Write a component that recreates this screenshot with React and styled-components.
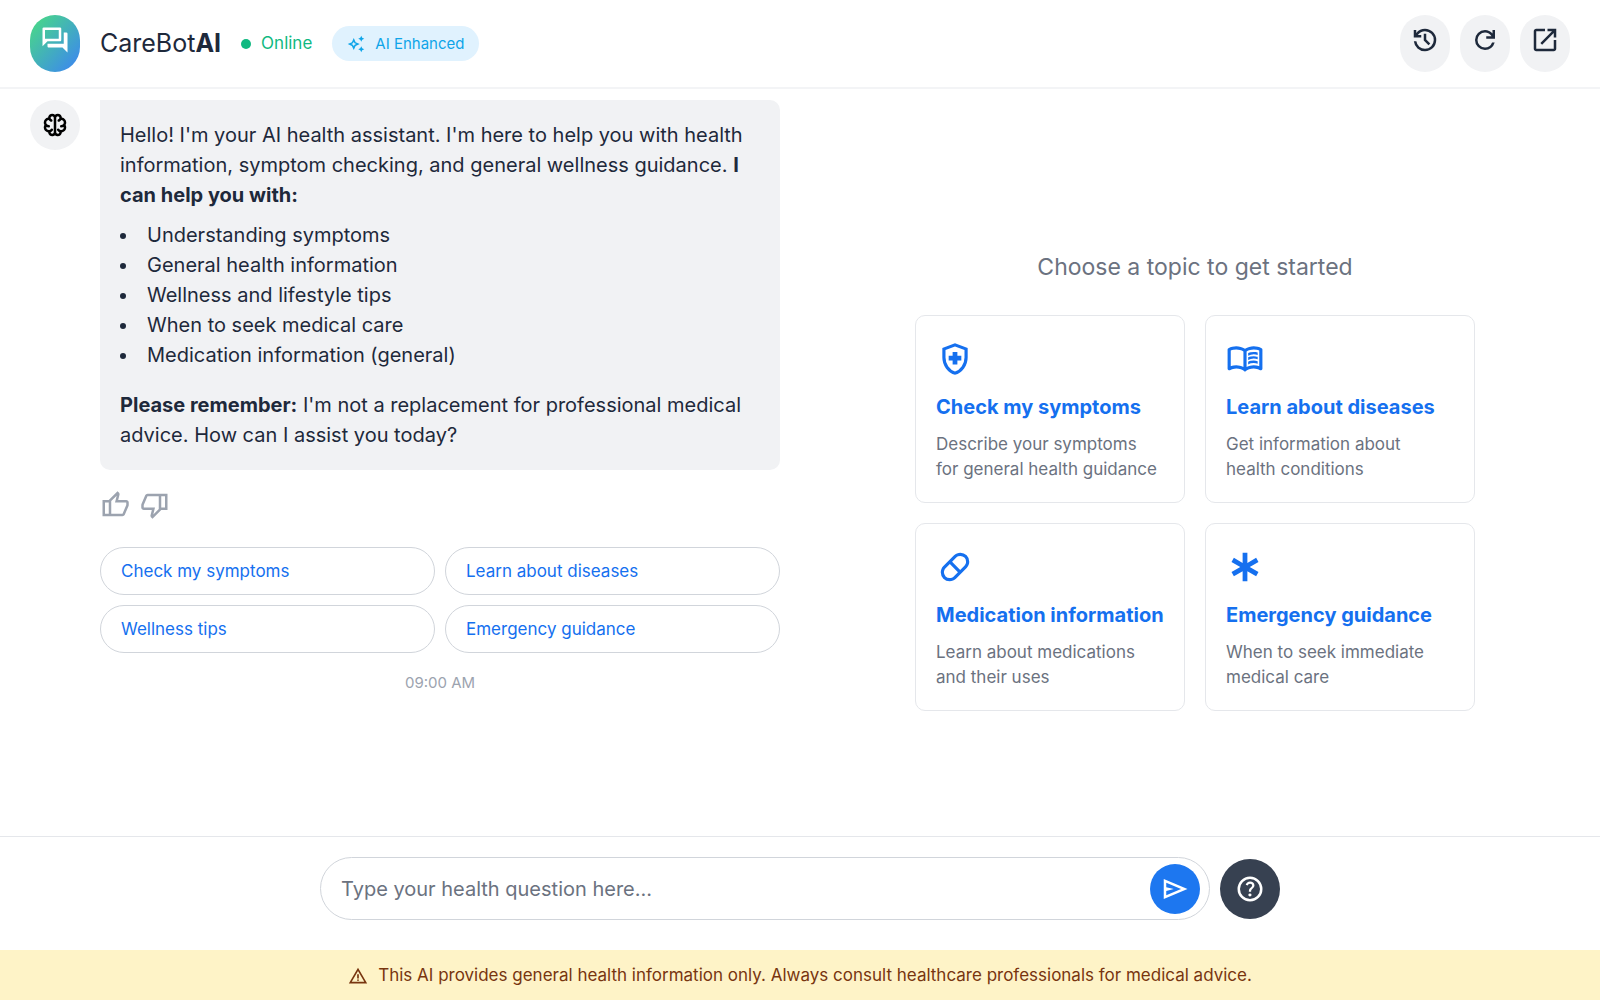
import React from 'react';
import styled, { createGlobalStyle } from 'styled-components';

const GlobalStyle = createGlobalStyle`
  *, *::before, *::after { box-sizing: border-box; }
  body {
    margin: 0;
    background: #fff;
    color: #1e293b;
    font-family: Inter, "Liberation Sans", sans-serif;
    font-size: 20px;
    line-height: 30px;
  }
  h1, h2, h3, p, ul { margin: 0; padding: 0; font-size: inherit; font-weight: inherit; }
  button, input { font: inherit; color: inherit; margin: 0; }
  button { cursor: pointer; }
`;

const paths = {
  forum: 'M280-240q-17 0-28.5-11.5T240-280v-80h520v-360h80q17 0 28.5 11.5T880-680v600L720-240H280ZM80-280v-560q0-17 11.5-28.5T120-880h520q17 0 28.5 11.5T680-840v360q0 17-11.5 28.5T640-440H240L80-280Zm520-240v-280H160v280h440Zm-440 0v-280 280Z',
  sparkle: 'm760-600-50-110-110-50 110-50 50-110 50 110 110 50-110 50-50 110Zm0 560-50-110-110-50 110-50 50-110 50 110 110 50-110 50-50 110ZM360-160 260-380 40-480l220-100 100-220 100 220 220 100-220 100-100 220Zm0-194 40-86 86-40-86-40-40-86-40 86-86 40 86 40 40 86Zm0-126Z',
  brain: 'M390-120q-51 0-88-35.5T260-241q-60-8-100-53t-40-106q0-21 5.5-41.5T142-480q-11-18-16.5-38t-5.5-42q0-61 40-105.5t99-52.5q3-51 41-86.5t90-35.5q26 0 48.5 10t41.5 27q18-17 41-27t49-10q52 0 89.5 35t40.5 86q59 8 99.5 53T840-560q0 22-5.5 42T818-480q11 18 16.5 38.5T840-400q0 62-40.5 106.5T699-241q-5 50-41.5 85.5T570-120q-25 0-48.5-9.5T480-156q-19 17-42 26.5t-48 9.5Zm130-590v460q0 21 14.5 35.5T570-200q20 0 34.5-16t15.5-36q-21-8-38.5-21.5T550-306q-10-14-7.5-30t16.5-26q14-10 30-7.5t26 16.5q11 16 28 24.5t37 8.5q33 0 56.5-23.5T760-400q0-5-.5-10t-2.5-10q-17 10-36.5 15t-40.5 5q-17 0-28.5-11.5T640-440q0-17 11.5-28.5T680-480q33 0 56.5-23.5T760-560q0-33-23.5-56T680-640q-11 18-28.5 31.5T613-587q-16 6-31-1t-20-23q-5-16 1.5-31t22.5-20q15-5 24.5-18t9.5-30q0-21-14.5-35.5T570-760q-21 0-35.5 14.5T520-710Zm-80 460v-460q0-21-14.5-35.5T390-760q-21 0-35.5 14.5T340-710q0 16 9 29.5t24 18.5q16 5 23 20t2 31q-6 16-21 23t-31 1q-21-8-38.5-21.5T279-640q-32 1-55.5 24.5T200-560q0 33 23.5 56.5T280-480q17 0 28.5 11.5T320-440q0 17-11.5 28.5T280-400q-21 0-40.5-5T203-420q-2 5-2.5 10t-.5 10q0 33 23.5 56.5T280-320q20 0 37-8.5t28-24.5q10-14 26-16.5t30 7.5q14 10 16.5 26t-7.5 30q-14 19-32 33t-39 22q1 20 16 35.5t35 15.5q21 0 35.5-14.5T440-250Zm40-230Z',
  history: 'M480-120q-138 0-240.5-91.5T122-440h82q14 104 92.5 172T480-200q117 0 198.5-81.5T760-480q0-117-81.5-198.5T480-760q-69 0-129 32t-101 88h110v80H120v-240h80v94q51-64 124.5-99T480-840q75 0 140.5 28.5t114 77q48.5 48.5 77 114T840-480q0 75-28.5 140.5t-77 114q-48.5 48.5-114 77T480-120Zm112-192L440-464v-216h80v184l128 128-56 56Z',
  refresh: 'M480-160q-134 0-227-93t-93-227q0-134 93-227t227-93q69 0 132 28.5T720-690v-110h80v280H520v-80h168q-32-56-87.5-88T480-720q-100 0-170 70t-70 170q0 100 70 170t170 70q77 0 139-44t87-116h84q-28 106-114 173t-196 67Z',
  openNew: 'M200-120q-33 0-56.5-23.5T120-200v-560q0-33 23.5-56.5T200-840h280v80H200v560h560v-280h80v280q0 33-23.5 56.5T760-120H200Zm188-212-56-56 372-372H560v-80h280v280h-80v-144L388-332Z',
  thumbUp: 'M720-120H280v-520l280-280 50 50q7 7 11.5 19t4.5 23v14l-44 174h258q32 0 56 24t24 56v80q0 7-2 15t-4 15L794-168q-9 20-30 34t-44 14Zm-360-80h360l120-280v-80H480l54-220-174 174v406Zm0-406v406-406Zm-80-34v80H160v360h120v80H80v-520h200Z',
  thumbDown: 'M240-840h440v520L400-40l-50-50q-7-7-11.5-19t-4.5-23v-14l44-174H120q-32 0-56-24t-24-56v-80q0-7 2-15t4-15l120-282q9-20 30-34t44-14Zm360 80H240L120-480v80h360l-54 220 174-174v-406Zm0 406v-406 406Zm80 34v-80h120v-360H680v-80h200v520H680Z',
  shield: 'M420-340h120v-100h100v-120H540v-100H420v100H320v120h100v100Zm60 260q-139-35-229.5-159.5T160-516v-244l320-120 320 120v244q0 152-90.5 276.5T480-80Zm0-84q104-33 172-132t68-220v-189l-240-90-240 90v189q0 121 68 220t172 132Z',
  book: 'M560-564v-68q33-14 67.5-21t72.5-7q26 0 51 4t49 10v64q-24-9-48.5-13.5T700-600q-38 0-73 9.5T560-564Zm0 220v-68q33-14 67.5-21t72.5-7q26 0 51 4t49 10v64q-24-9-48.5-13.5T700-380q-38 0-73 9t-67 27Zm0-110v-68q33-14 67.5-21t72.5-7q26 0 51 4t49 10v64q-24-9-48.5-13.5T700-490q-38 0-73 9.5T560-454ZM260-320q47 0 91.5 10.5T440-278v-394q-41-24-87-36t-93-12q-36 0-71.5 7T120-692v396q35-12 69.5-18t70.5-6Zm260 42q44-21 88.5-31.5T700-320q36 0 70.5 6t69.5 18v-396q-33-14-68.5-21t-71.5-7q-47 0-93 12t-87 36v394Zm-40 118q-48-38-104-59t-116-21q-42 0-82.5 11T100-198q-21 11-40.5-1T40-234v-482q0-11 5.5-21T62-752q46-24 96-36t102-12q58 0 113.5 15T480-740q51-30 106.5-45T700-800q52 0 102 12t96 36q11 5 16.5 15t5.5 21v482q0 23-19.5 35t-40.5 1q-37-20-77.5-31T700-240q-60 0-116 21t-104 59ZM280-494Z',
  pill: 'M345-120q-94 0-159.5-65.5T120-345q0-45 17-86t49-73l270-270q32-32 73-49t86-17q94 0 159.5 65.5T840-615q0 45-17 86t-49 73L504-186q-32 32-73 49t-86 17Zm266-286 107-106q20-20 31-47t11-56q0-60-42.5-102.5T615-760q-29 0-56 11t-47 31L406-611l205 205ZM345-200q29 0 56-11t47-31l106-107-205-205-107 106q-20 20-31 47t-11 56q0 60 42.5 102.5T345-200Z',
  emergency: 'M420-120v-255L199-248l-60-104 221-128-221-127 60-104 221 127v-256h120v256l221-127 60 104-221 127 221 128-60 104-221-127v255H420Z',
  send: 'M120-160v-640l760 320-760 320Zm80-120 474-200-474-200v140l240 60-240 60v140Zm0 0v-400 400Z',
  help: 'M478-240q21 0 35.5-14.5T528-290q0-21-14.5-35.5T478-340q-21 0-35.5 14.5T428-290q0 21 14.5 35.5T478-240Zm-36-154h74q0-33 7.5-52t42.5-52q26-26 41-49.5t15-56.5q0-56-41-86t-97-30q-57 0-92.5 30T342-618l66 26q5-18 22.5-39t53.5-21q32 0 48 17.5t16 38.5q0 20-12 37.5T506-526q-44 39-54 59t-10 73Zm38 314q-83 0-156-31.5T197-197q-54-54-85.5-127T80-480q0-83 31.5-156T197-763q54-54 127-85.5T480-880q83 0 156 31.5T763-763q54 54 85.5 127T880-480q0 83-31.5 156T763-197q-54 54-127 85.5T480-80Zm0-80q134 0 227-93t93-227q0-134-93-227t-227-93q-134 0-227 93t-93 227q0 134 93 227t227 93Z',
  warning: 'm40-120 440-760 440 760H40Zm138-80h604L480-720 178-200Zm302-40q17 0 28.5-11.5T520-280q0-17-11.5-28.5T480-320q-17 0-28.5 11.5T440-280q0 17 11.5 28.5T480-240Zm-40-120h80v-200h-80v200Z',
};

const Glyph = styled.svg`
  display: block;
  flex: none;
  width: ${(p) => p.$size}px;
  height: ${(p) => p.$size}px;
  fill: currentColor;
`;

function Icon({ name, size = 30 }) {
  return (
    <Glyph viewBox="0 -960 960 960" $size={size} aria-hidden="true">
      <path d={paths[name]} />
    </Glyph>
  );
}

const Page = styled.div`
  display: flex;
  flex-direction: column;
  min-height: 100vh;
`;

const Header = styled.header`
  display: flex;
  align-items: center;
  justify-content: space-between;
  padding: 15px 30px;
  border-bottom: 2px solid #f3f4f6;
`;

const Brand = styled.div`
  display: flex;
  align-items: center;
  gap: 20px;
`;

const Logo = styled.div`
  padding: 10px 10px 17px;
  border-radius: 25px;
  background: linear-gradient(to bottom right, #4ade80, #3b82f6);
  color: #fff;
`;

const Title = styled.h1`
  font-size: 25px;
  line-height: 35px;
`;

const Status = styled.div`
  display: flex;
  align-items: center;
  gap: 10px;
  color: #10b981;
  font-size: 17px;
  line-height: 25px;

  &::before {
    content: '';
    width: 10px;
    height: 10px;
    border-radius: 50%;
    background: currentColor;
  }
`;

const Badge = styled.div`
  display: flex;
  align-items: center;
  gap: 10px;
  padding: 5px 15px;
  border-radius: 18px;
  background: #e0f2fe;
  color: #0ea5e9;
  font-size: 15px;
  line-height: 25px;
`;

const Actions = styled.nav`
  display: flex;
  gap: 10px;
`;

const ActionButton = styled.button`
  padding: 10px 10px 17px;
  border: 0;
  border-radius: 25px;
  background: #f1f2f4;
`;

const Main = styled.main`
  flex: 1;
  display: grid;
  grid-template-columns: 1fr 1fr;
  gap: 40px;
  padding: 11px 30px 20px;
`;

const Chat = styled.section`
  display: flex;
  align-items: flex-start;
  gap: 20px;
`;

const Avatar = styled.div`
  display: grid;
  place-items: center;
  flex: none;
  width: 50px;
  height: 50px;
  border-radius: 50%;
  background: #f1f2f4;
  color: #000;
`;

const Message = styled.div`
  flex: 1;
`;

const Bubble = styled.div`
  padding: 20px;
  border-radius: 0 10px 10px 10px;
  background: #f1f2f4;

  strong { font-weight: 700; }
`;

const HelpList = styled.ul`
  margin: 10px 0 20px;
  list-style: disc inside;
`;

const Feedback = styled.div`
  display: flex;
  gap: 10px;
  padding: 20px 0 27px;
  color: #9ca3af;
`;

const PlainButton = styled.button`
  padding: 0;
  border: 0;
  background: none;
  color: inherit;
`;

const Replies = styled.div`
  display: grid;
  grid-template-columns: 1fr 1fr;
  gap: 10px;
`;

const Reply = styled.button`
  padding: 10px 20px;
  border: 1px solid #d1d5db;
  border-radius: 24px;
  background: #fff;
  color: #1570ef;
  font-size: 17px;
  line-height: 26px;
  text-align: left;
`;

const Time = styled.p`
  padding-top: 20px;
  color: #9ca3af;
  font-size: 15px;
  line-height: 20px;
  text-align: center;
`;

const Topics = styled.section`
  display: flex;
  flex-direction: column;
  align-items: center;
  justify-content: center;
  padding-top: 45px;
`;

const TopicsTitle = styled.h2`
  margin-bottom: 30px;
  color: #6b7280;
  font-size: 23px;
  line-height: 35px;
`;

const TopicGrid = styled.div`
  display: grid;
  grid-template-columns: 1fr 1fr;
  gap: 20px;
  width: 100%;
  max-width: 560px;
`;

const Card = styled.button`
  padding: 24px 20px 20px;
  border: 1px solid #e5e7eb;
  border-radius: 10px;
  background: #fff;
  text-align: left;
`;

const CardIcon = styled.span`
  display: block;
  margin-bottom: 14px;
  color: #1570ef;
`;

const CardTitle = styled.span`
  display: block;
  margin-bottom: 10px;
  color: #1570ef;
  font-weight: 700;
  white-space: nowrap;
`;

const CardText = styled.span`
  display: block;
  color: #6b7280;
  font-size: 17px;
  line-height: 25px;
`;

const Composer = styled.form`
  padding: 20px 30px 30px;
  border-top: 1px solid #e5e7eb;
`;

const ComposerRow = styled.div`
  display: flex;
  align-items: center;
  gap: 10px;
  max-width: 960px;
  margin: 0 auto;
`;

const Field = styled.div`
  flex: 1;
  display: flex;
  align-items: center;
  padding: 6px 9px 5px 20px;
  border: 1px solid #d1d5db;
  border-radius: 32px;
`;

const QuestionInput = styled.input`
  flex: 1;
  min-width: 0;
  padding: 0;
  border: 0;
  outline: 0;
  background: none;

  &::placeholder { color: #6b7280; opacity: 1; }
`;

const RoundButton = styled.button`
  display: grid;
  place-items: center;
  width: ${(p) => p.$size}px;
  height: ${(p) => p.$size}px;
  padding: 0;
  border: 0;
  border-radius: 50%;
  background: ${(p) => p.$color};
  color: #fff;
`;

const Notice = styled.footer`
  display: flex;
  align-items: center;
  justify-content: center;
  gap: 10px;
  padding: 13px 30px 12px;
  background: #fef3c7;
  color: #78350f;
  font-size: 17px;
  line-height: 25px;
`;

const actions = [
  { icon: 'history', label: 'History' },
  { icon: 'refresh', label: 'Restart chat' },
  { icon: 'openNew', label: 'Open in new window' },
];

const helpItems = [
  'Understanding symptoms',
  'General health information',
  'Wellness and lifestyle tips',
  'When to seek medical care',
  'Medication information (general)',
];

const replies = ['Check my symptoms', 'Learn about diseases', 'Wellness tips', 'Emergency guidance'];

const topics = [
  { icon: 'shield', title: 'Check my symptoms', lines: ['Describe your symptoms', 'for general health guidance'] },
  { icon: 'book', title: 'Learn about diseases', lines: ['Get information about', 'health conditions'] },
  { icon: 'pill', title: 'Medication information', lines: ['Learn about medications', 'and their uses'] },
  { icon: 'emergency', title: 'Emergency guidance', lines: ['When to seek immediate', 'medical care'] },
];

export default function App() {
  return (
    <Page>
      <GlobalStyle />
      <Header>
        <Brand>
          <Logo><Icon name="forum" /></Logo>
          <Title>CareBot<b>AI</b></Title>
          <Status>Online</Status>
          <Badge><Icon name="sparkle" size={18} />AI Enhanced</Badge>
        </Brand>
        <Actions>
          {actions.map((a) => (
            <ActionButton key={a.icon} type="button" aria-label={a.label}>
              <Icon name={a.icon} />
            </ActionButton>
          ))}
        </Actions>
      </Header>

      <Main>
        <Chat>
          <Avatar><Icon name="brain" /></Avatar>
          <Message>
            <Bubble>
              <p>
                Hello! I'm your AI health assistant. I'm here to help you with health information,
                symptom checking, and general wellness guidance. <strong>I can help you with:</strong>
              </p>
              <HelpList>
                {helpItems.map((t) => <li key={t}>{t}</li>)}
              </HelpList>
              <p>
                <strong>Please remember:</strong> I'm not a replacement for professional medical
                advice. How can I assist you today?
              </p>
            </Bubble>
            <Feedback>
              <PlainButton type="button" aria-label="Helpful"><Icon name="thumbUp" /></PlainButton>
              <PlainButton type="button" aria-label="Not helpful"><Icon name="thumbDown" /></PlainButton>
            </Feedback>
            <Replies>
              {replies.map((r) => <Reply key={r} type="button">{r}</Reply>)}
            </Replies>
            <Time>09:00 AM</Time>
          </Message>
        </Chat>

        <Topics>
          <TopicsTitle>Choose a topic to get started</TopicsTitle>
          <TopicGrid>
            {topics.map((t) => (
              <Card key={t.title} type="button">
                <CardIcon><Icon name={t.icon} size={38} /></CardIcon>
                <CardTitle>{t.title}</CardTitle>
                <CardText>{t.lines[0]}<br />{t.lines[1]}</CardText>
              </Card>
            ))}
          </TopicGrid>
        </Topics>
      </Main>

      <Composer onSubmit={(e) => e.preventDefault()}>
        <ComposerRow>
          <Field>
            <QuestionInput type="text" aria-label="Health question" placeholder="Type your health question here..." />
            <RoundButton type="submit" aria-label="Send" $size={50} $color="#1d77f0"><Icon name="send" /></RoundButton>
          </Field>
          <RoundButton type="button" aria-label="Help" $size={60} $color="#374151"><Icon name="help" /></RoundButton>
        </ComposerRow>
      </Composer>
      <Notice>
        <Icon name="warning" size={20} />
        <span>This AI provides general health information only. Always consult healthcare professionals for medical advice.</span>
      </Notice>
    </Page>
  );
}
